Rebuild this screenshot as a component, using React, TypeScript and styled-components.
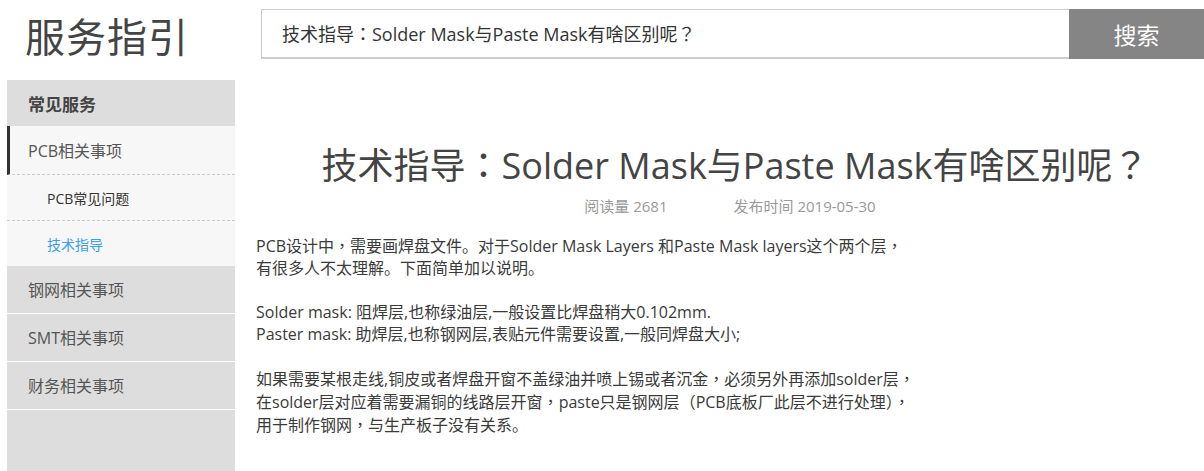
import React from "react";
import styled, { createGlobalStyle } from "styled-components";

const GlobalStyle = createGlobalStyle`
  html, body {
    margin: 0;
    padding: 0;
    background: #fff;
    font-family: "Open Sans", "Noto Sans CJK SC", sans-serif;
  }
`;

const Page = styled.div`
  width: 1204px;
  height: 471px;
  overflow: hidden;
`;

const Header = styled.div`
  display: flex;
  height: 80px;
`;

const Logo = styled.div`
  width: 261px;
  padding-left: 25px;
  box-sizing: border-box;
  font-family: "Noto Sans CJK SC", sans-serif;
  font-size: 40px;
  line-height: 70px;
  color: #444;
  letter-spacing: 1px;
`;

const SearchBox = styled.div`
  display: flex;
  margin-top: 9px;
  height: 50px;
  flex: 1;
`;

const SearchInput = styled.div`
  flex: 1;
  border: 1px solid #ccc;
  border-bottom-width: 2px;
  border-right: none;
  box-sizing: border-box;
  padding-left: 20px;
  font-size: 18px;
  line-height: 47px;
  color: #333;
`;

const SearchButton = styled.div`
  width: 135px;
  background: #858585;
  color: #fff;
  font-family: "Noto Sans CJK SC", sans-serif;
  font-size: 23px;
  line-height: 50px;
  text-align: center;
`;

// centred full-width punctuation, as the page's font draws it
const Punct = styled.span`
  font-family: "Noto Sans CJK TC", sans-serif;
`;

const punctuate = (text: string) =>
  text.split(/([，：？（）])/).map((part, i) =>
    /^[，：？（）]$/.test(part) ? <Punct key={i}>{part}</Punct> : part
  );

const Body = styled.div`
  display: flex;
`;

const Sidebar = styled.div`
  width: 228px;
  margin-left: 7px;
  height: 391px;
  background: #ddd;
`;

const SideHeader = styled.div`
  height: 46px;
  line-height: 48px;
  padding-left: 21px;
  font-family: "Noto Sans CJK SC", sans-serif;
  font-size: 17px;
  font-weight: 700;
  color: #444;
`;

const ActiveGroup = styled.div`
  background: #f7f7f7;
`;

const NavItem = styled.div<{ $active?: boolean }>`
  height: ${(p) => (p.$active ? "48px" : "47px")};
  line-height: ${(p) => (p.$active ? "50px" : "49px")};
  padding-left: ${(p) => (p.$active ? "18px" : "21px")};
  font-size: 16px;
  color: #555;
  border-left: ${(p) => (p.$active ? "3px solid #333" : "none")};
  border-bottom: ${(p) => (p.$active ? "1px dashed #ccc" : "1px solid #fff")};
`;

const SubItem = styled.div<{ $current?: boolean; $last?: boolean }>`
  height: 45px;
  line-height: 47px;
  padding-left: 40px;
  font-size: 14px;
  color: ${(p) => (p.$current ? "#3b9cf0" : "#333")};
  border-bottom: ${(p) => (p.$last ? "none" : "1px dashed #ccc")};
`;

const Main = styled.div`
  flex: 1;
  padding-left: 21px;
  color: #333;
`;

const Title = styled.h1`
  margin: 58px 0 0;
  font-weight: 400;
  font-size: 36px;
  line-height: 50px;
  color: #444;
  text-align: center;
  padding-left: 10px;
`;

const Meta = styled.div`
  display: flex;
  justify-content: center;
  gap: 66px;
  font-size: 15px;
  line-height: 22px;
  color: #999;
  margin-top: 4px;
`;

const Content = styled.div`
  margin-top: 17px;
  font-size: 16px;
  line-height: 22px;
  color: #3a3a3a;
`;

const Para = styled.p`
  margin: 0 0 22px;
`;

export default function App() {
  return (
    <Page>
      <GlobalStyle />
      <Header>
        <Logo>服务指引</Logo>
        <SearchBox>
          <SearchInput>{punctuate("技术指导：Solder Mask与Paste Mask有啥区别呢？")}</SearchInput>
          <SearchButton>搜索</SearchButton>
        </SearchBox>
      </Header>
      <Body>
        <Sidebar>
          <SideHeader>常见服务</SideHeader>
          <ActiveGroup>
            <NavItem $active>PCB相关事项</NavItem>
            <SubItem>PCB常见问题</SubItem>
            <SubItem $current $last>
              技术指导
            </SubItem>
          </ActiveGroup>
          <NavItem>钢网相关事项</NavItem>
          <NavItem>SMT相关事项</NavItem>
          <NavItem>财务相关事项</NavItem>
        </Sidebar>
        <Main>
          <Title>{punctuate("技术指导：Solder Mask与Paste Mask有啥区别呢？")}</Title>
          <Meta>
            <span>阅读量 2681</span>
            <span>发布时间 2019-05-30</span>
          </Meta>
          <Content>
            <Para>
              {punctuate("PCB设计中，需要画焊盘文件。对于Solder Mask Layers 和Paste Mask layers这个两个层，")}
              <br />
              有很多人不太理解。下面简单加以说明。
            </Para>
            <Para>
              Solder mask: 阻焊层,也称绿油层,一般设置比焊盘稍大0.102mm.
              <br />
              Paster mask: 助焊层,也称钢网层,表贴元件需要设置,一般同焊盘大小;
            </Para>
            <Para>
              {punctuate("如果需要某根走线,铜皮或者焊盘开窗不盖绿油并喷上锡或者沉金，必须另外再添加solder层，")}
              <br />
              {punctuate("在solder层对应着需要漏铜的线路层开窗，paste只是钢网层（PCB底板厂此层不进行处理），")}
              <br />
              {punctuate("用于制作钢网，与生产板子没有关系。")}
            </Para>
          </Content>
        </Main>
      </Body>
    </Page>
  );
}
